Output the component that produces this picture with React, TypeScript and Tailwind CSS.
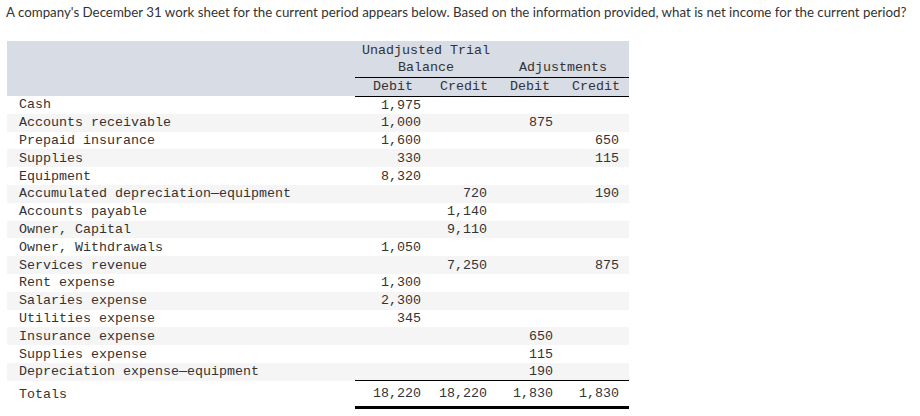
const rows: [string, string, string, string, string][] = [
  ["Cash", "1,975", "", "", ""],
  ["Accounts receivable", "1,000", "", "875", ""],
  ["Prepaid insurance", "1,600", "", "", "650"],
  ["Supplies", "330", "", "", "115"],
  ["Equipment", "8,320", "", "", ""],
  ["Accumulated depreciation\u2014equipment", "", "720", "", "190"],
  ["Accounts payable", "", "1,140", "", ""],
  ["Owner, Capital", "", "9,110", "", ""],
  ["Owner, Withdrawals", "1,050", "", "", ""],
  ["Services revenue", "", "7,250", "", "875"],
  ["Rent expense", "1,300", "", "", ""],
  ["Salaries expense", "2,300", "", "", ""],
  ["Utilities expense", "345", "", "", ""],
  ["Insurance expense", "", "", "650", ""],
  ["Supplies expense", "", "", "115", ""],
  ["Depreciation expense\u2014equipment", "", "", "190", ""],
]

export default function App() {
  return (
    <div className="w-[920px] h-[416px] bg-white text-[#333] overflow-hidden">
      <p className="pl-[6px] pt-[4px] h-[41px] text-[13.3px] leading-[16px] font-['Lato',sans-serif] whitespace-nowrap">
        A company's December 31 work sheet for the current period appears below. Based on the information provided, what is net income for the current period?
      </p>

      <table className="ml-[7px] table-fixed border-collapse font-['Liberation_Mono',monospace] text-[13.33px] leading-[17px] text-[#333]">
        <colgroup>
          <col className="w-[348px]" />
          <col className="w-[76px]" />
          <col className="w-[66px]" />
          <col className="w-[66px]" />
          <col className="w-[66px]" />
        </colgroup>
        <thead className="bg-[#d7dce5]">
          <tr className="h-[36px]">
            <th rowSpan={2} className="p-0"></th>
            <th colSpan={2} className="p-0 font-normal text-center align-bottom leading-[17.5px]">
              Unadjusted Trial<br />Balance
            </th>
            <th colSpan={2} className="p-0 font-normal text-center align-bottom leading-[17.5px]">
              Adjustments
            </th>
          </tr>
          <tr className="h-[19px]">
            <th className="p-0 font-normal text-center border-y border-black">Debit</th>
            <th className="p-0 font-normal text-center border-y border-black">Credit</th>
            <th className="p-0 font-normal text-center border-y border-black">Debit</th>
            <th className="p-0 font-normal text-center border-y border-black">Credit</th>
          </tr>
        </thead>
        <tbody>
          {rows.map((r, i) => (
            <tr key={r[0]} className={`h-[17.8px] ${i % 2 === 1 ? "bg-[#f5f5f5]" : "bg-white"}`}>
              <td className="pl-[12px] p-0 whitespace-nowrap">{r[0]}</td>
              <td className="p-0 pr-[10px] text-right">{r[1]}</td>
              <td className="p-0 pr-[10px] text-right">{r[2]}</td>
              <td className="p-0 pr-[10px] text-right">{r[3]}</td>
              <td className="p-0 pr-[10px] text-right">{r[4]}</td>
            </tr>
          ))}
          <tr className="h-[27px]">
            <td className="pl-[12px] p-0">Totals</td>
            <td className="p-0 pr-[10px] text-right border-t border-b-[3px] border-b-double border-black">18,220</td>
            <td className="p-0 pr-[10px] text-right border-t border-b-[3px] border-b-double border-black">18,220</td>
            <td className="p-0 pr-[10px] text-right border-t border-b-[3px] border-b-double border-black">1,830</td>
            <td className="p-0 pr-[10px] text-right border-t border-b-[3px] border-b-double border-black">1,830</td>
          </tr>
        </tbody>
      </table>
    </div>
  )
}
